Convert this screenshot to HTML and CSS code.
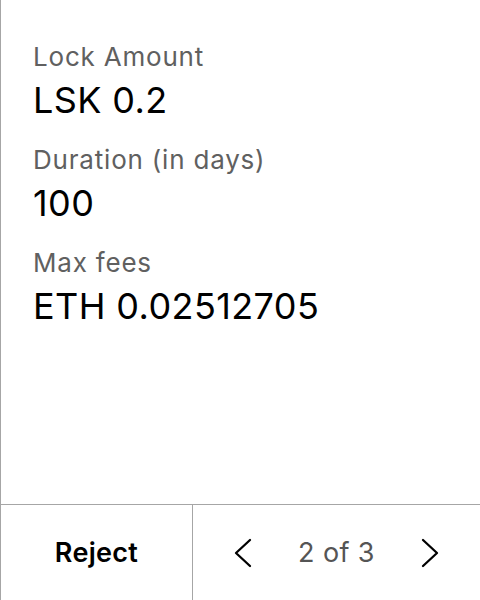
FILE: index.html
```html
<!DOCTYPE html>
<html>
<head>
<meta charset="utf-8">
<link rel="stylesheet" href="styles.css">
</head>
<body>
<div class="screen">
  <div class="content">
    <div class="field">
      <div class="label">Lock Amount</div>
      <div class="value">LSK 0.2</div>
    </div>
    <div class="field">
      <div class="label">Duration (in days)</div>
      <div class="value">100</div>
    </div>
    <div class="field">
      <div class="label">Max fees</div>
      <div class="value">ETH 0.02512705</div>
    </div>
  </div>
  <div class="footer">
    <div class="reject">Reject</div>
    <div class="pager">
      <svg class="chev" width="18" height="30" viewBox="0 0 18 30"><path d="M16 2 L2 15 L16 28" fill="none" stroke="#000" stroke-width="2.3" stroke-linecap="round" stroke-linejoin="round"/></svg>
      <span class="count">2 of 3</span>
      <svg class="chev" width="18" height="30" viewBox="0 0 18 30"><path d="M2 2 L16 15 L2 28" fill="none" stroke="#000" stroke-width="2.3" stroke-linecap="round" stroke-linejoin="round"/></svg>
    </div>
  </div>
</div>
</body>
</html>
```
FILE: styles.css
```css
html, body { margin: 0; padding: 0; background: #fff; }
body { font-family: Inter, "Noto Sans", sans-serif; }
.screen {
  width: 480px; height: 600px; box-sizing: border-box;
  border-left: 1px solid #a6a6a6;
  display: flex; flex-direction: column;
}
.content { flex: 1; padding: 41px 0 0 32px; display: flex; flex-direction: column; gap: 22px; }
.field { display: flex; flex-direction: column; gap: 5px; }
.label { font-size: 26px; line-height: 32px; letter-spacing: 0.8px; color: #606060; }
.value { font-size: 36px; line-height: 44px; letter-spacing: 0.4px; color: #000; }
.footer { height: 95px; border-top: 1px solid #a6a6a6; display: flex; }
.reject { width: 191px; border-right: 1px solid #a6a6a6; display: flex; align-items: center; justify-content: center; font-size: 27px; font-weight: 600; letter-spacing: 0.3px; color: #000; }
.pager { flex: 1; display: flex; align-items: center; justify-content: space-between; padding: 0 41px; }
.count { font-size: 27px; letter-spacing: 0.4px; color: #555; }
.chev { display: block; }
```
